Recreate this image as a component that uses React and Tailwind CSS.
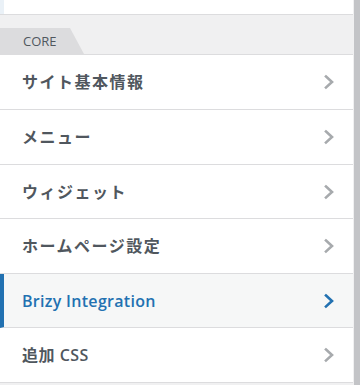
const items = [
  { label: 'サイト基本情報', h: 'h-[55px]', track: 'tracking-[1.5px]' },
  { label: 'メニュー', h: 'h-[55px]', track: 'tracking-[1.5px]' },
  { label: 'ウィジェット', h: 'h-[54px]', track: 'tracking-[1.5px]' },
  { label: 'ホームページ設定', h: 'h-[55px]', track: 'tracking-[1.5px]' },
  { label: 'Brizy Integration', h: 'h-[54px]', track: 'tracking-[0.3px]', active: true },
  { label: '追加 CSS', h: 'h-[55px]', track: 'tracking-[0.5px]' },
]

function Chevron({ active }) {
  return (
    <svg width="12" height="16" viewBox="0 0 12 16" className="shrink-0">
      <polyline
        points="3,2.5 9,8 3,13.5"
        fill="none"
        stroke={active ? '#2271b1' : '#a7aaad'}
        strokeWidth="2.6"
        strokeLinecap="square"
        strokeLinejoin="miter"
      />
    </svg>
  )
}

export default function App() {
  return (
    <div
      className="flex h-[385px] w-[360px] bg-[#f0f0f1] overflow-hidden"
      style={{ fontFamily: '"Open Sans", "Noto Sans CJK JP", sans-serif' }}
    >
      <div className="w-[353px] shrink-0 flex flex-col">
        {/* previous section, scrolled */}
        <div className="h-[15px] bg-white border-b border-[#dcdcde] flex">
          <div className="w-[4px] bg-[#eaf1f7]" />
        </div>

        {/* section tab */}
        <div className="flex pt-[13px]">
          <div className="relative h-[26px] w-[70px] bg-[#dcdcde] pl-[23px] flex items-center">
            <span className="text-[13px] text-[#50575e] leading-none">CORE</span>
            <div className="absolute top-0 right-[-14px] h-[26px] w-[14px] bg-[#dcdcde] [clip-path:polygon(0_0,0_100%,100%_100%)]" />
          </div>
        </div>

        <ul className="bg-white border-t border-[#dcdcde]">
          {items.map((it) => (
            <li
              key={it.label}
              className={`${it.h} flex items-center justify-between border-b border-[#dcdcde] pr-[18px] ${
                it.active ? 'bg-[#f6f7f7] border-l-4 border-l-[#2271b1] pl-[18px]' : 'pl-[22px]'
              }`}
            >
              <span
                className={`text-[16px] font-semibold ${it.track} ${
                  it.active ? 'text-[#2271b1]' : 'text-[#50575e]'
                }`}
              >
                {it.label}
              </span>
              <Chevron active={it.active} />
            </li>
          ))}
        </ul>
      </div>
      <div className="w-px shrink-0 bg-[#f0f0f1]" />
      <div className="w-[6px] shrink-0 bg-[#c3c4c7]" />
    </div>
  )
}
